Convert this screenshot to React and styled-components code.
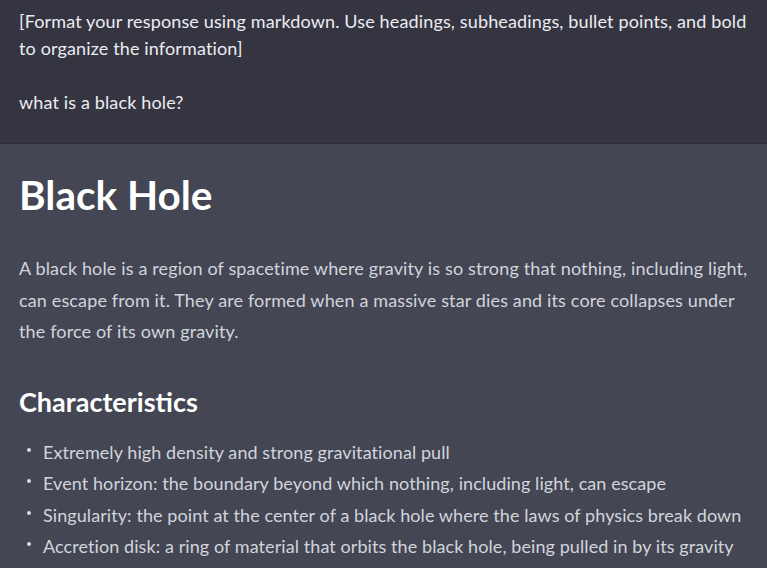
import React from "react";
import styled, { createGlobalStyle } from "styled-components";

const GlobalStyle = createGlobalStyle`
  html, body { margin: 0; padding: 0; background: #444654; }
  body { font-family: "Lato", "Segoe UI", sans-serif; -webkit-font-smoothing: antialiased; }
`;

const Page = styled.div`
  width: 767px;
  height: 568px;
  overflow: hidden;
  display: flex;
  flex-direction: column;
`;

const PromptBlock = styled.section`
  background: #343541;
  border-bottom: 1px solid #2b2c36;
  padding: 8px 19px 27px;
  color: #ececf1;
  font-size: 18px;
  line-height: 27px;
  letter-spacing: 0.14px;
  white-space: pre-wrap;
`;

const Response = styled.section`
  flex: 1;
  background: #444654;
  padding: 28px 19px 0;
  color: #d1d5db;
  font-size: 18px;
  letter-spacing: 0.14px;
`;

const Title = styled.h1`
  margin: 0 0 36px;
  font-size: 40.5px;
  line-height: 45px;
  font-weight: 700;
  color: #ffffff;
  letter-spacing: 0;
`;

const Paragraph = styled.p`
  margin: 0;
  line-height: 31.5px;
`;

const Subtitle = styled.h2`
  margin: 36px 0 17px;
  font-size: 27px;
  line-height: 36px;
  font-weight: 700;
  color: #ffffff;
  letter-spacing: 0;
`;

const List = styled.ul`
  margin: 0;
  padding: 0 0 0 8px;
  list-style: none;
`;

const Item = styled.li`
  display: flex;
  align-items: flex-start;
  line-height: 31.5px;
  white-space: nowrap;
  letter-spacing: 0.08px;

  &::before {
    content: "";
    flex: none;
    width: 4px;
    height: 4px;
    border-radius: 50%;
    background: #d9d9e3;
    margin: 11px 12px 0 0;
  }
`;

const items = [
  "Extremely high density and strong gravitational pull",
  "Event horizon: the boundary beyond which nothing, including light, can escape",
  "Singularity: the point at the center of a black hole where the laws of physics break down",
  "Accretion disk: a ring of material that orbits the black hole, being pulled in by its gravity",
];

export default function App() {
  return (
    <Page>
      <GlobalStyle />
      <PromptBlock>
        {"[Format your response using markdown. Use headings, subheadings, bullet points, and bold to organize the information]\n\nwhat is a black hole?"}
      </PromptBlock>
      <Response>
        <Title>Black Hole</Title>
        <Paragraph>
          A black hole is a region of spacetime where gravity is so strong that nothing, including light, can escape
          from it. They are formed when a massive star dies and its core collapses under the force of its own gravity.
        </Paragraph>
        <Subtitle>Characteristics</Subtitle>
        <List>
          {items.map((t) => (
            <Item key={t}>{t}</Item>
          ))}
        </List>
      </Response>
    </Page>
  );
}
